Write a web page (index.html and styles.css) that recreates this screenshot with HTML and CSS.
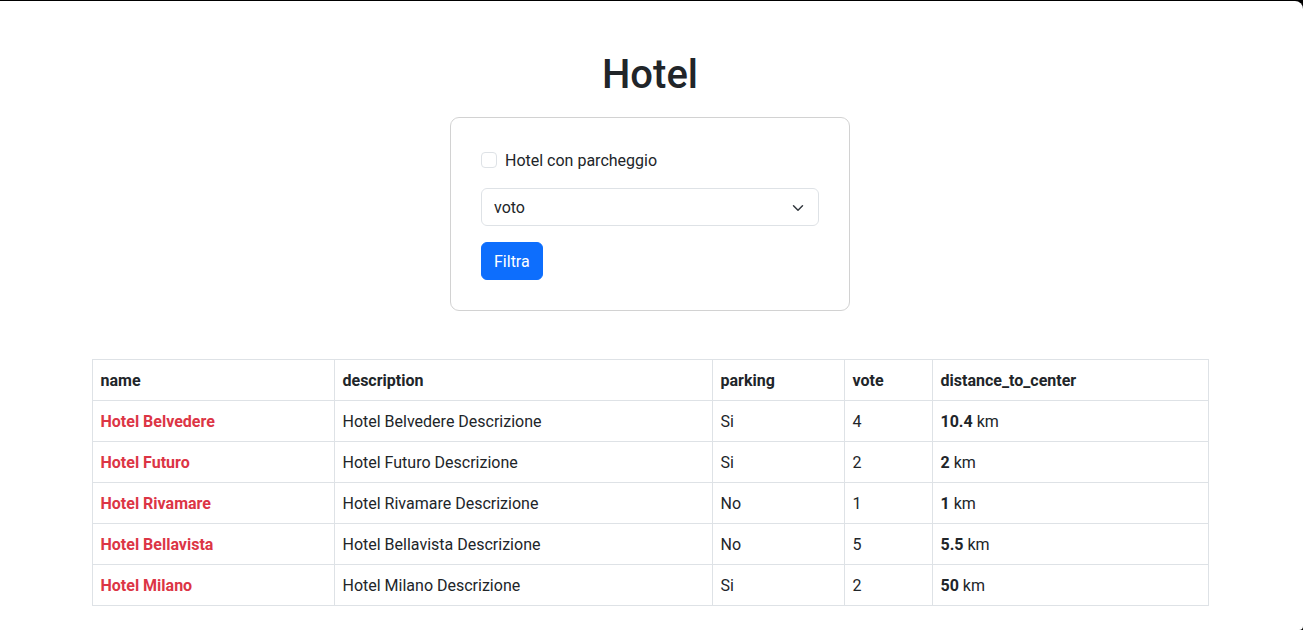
FILE: index.html
```html
<!DOCTYPE html>
<html lang="it">
<head>
<meta charset="utf-8">
<title>Hotel</title>
<link rel="stylesheet" href="styles.css">
</head>
<body>
<div class="page">
  <h1 class="title">Hotel</h1>
  <form class="card">
    <div class="form-check">
      <span class="check-box"></span>
      <label class="check-label">Hotel con parcheggio</label>
    </div>
    <div class="select">
      <span class="select-text">voto</span>
      <svg class="chevron" width="16" height="16" viewBox="0 0 16 16"><path fill="none" stroke="#343a40" stroke-linecap="round" stroke-linejoin="round" stroke-width="2" d="m2 5 6 6 6-6"/></svg>
    </div>
    <button type="button" class="btn">Filtra</button>
  </form>
  <table class="hotels">
    <colgroup>
      <col class="c-name"><col class="c-desc"><col class="c-park"><col class="c-vote"><col class="c-dist">
    </colgroup>
    <thead>
      <tr><th>name</th><th>description</th><th>parking</th><th>vote</th><th>distance_to_center</th></tr>
    </thead>
    <tbody>
      <tr><td class="name">Hotel Belvedere</td><td>Hotel Belvedere Descrizione</td><td>Si</td><td>4</td><td><strong>10.4</strong> km</td></tr>
      <tr><td class="name">Hotel Futuro</td><td>Hotel Futuro Descrizione</td><td>Si</td><td>2</td><td><strong>2</strong> km</td></tr>
      <tr><td class="name">Hotel Rivamare</td><td>Hotel Rivamare Descrizione</td><td>No</td><td>1</td><td><strong>1</strong> km</td></tr>
      <tr><td class="name">Hotel Bellavista</td><td>Hotel Bellavista Descrizione</td><td>No</td><td>5</td><td><strong>5.5</strong> km</td></tr>
      <tr><td class="name">Hotel Milano</td><td>Hotel Milano Descrizione</td><td>Si</td><td>2</td><td><strong>50</strong> km</td></tr>
    </tbody>
  </table>
</div>
</body>
</html>
```
FILE: styles.css
```css
html {
  background: #000;
}
body {
  margin: 0;
  margin-top: 1px;
  padding-right: 3px;
  height: 629px;
  overflow: hidden;
  background: #fff;
  border-top-right-radius: 8px;
  border-bottom-right-radius: 4px;
  font-family: Roboto, "Liberation Sans", sans-serif;
  font-size: 16px;
  line-height: 1.5;
  color: #212529;
}
.page {
  width: 1116px;
  margin: 0 auto;
  padding-top: 50px;
  display: flex;
  flex-direction: column;
  align-items: center;
}
.title {
  margin: 0 0 18px;
  font-size: 40px;
  font-weight: 500;
  line-height: 48px;
}
.card {
  width: 400px;
  box-sizing: border-box;
  padding: 30px;
  border: 1px solid #d2d2d2;
  border-radius: 9px;
  display: flex;
  flex-direction: column;
  align-items: flex-start;
  margin-bottom: 48px;
}
.form-check {
  display: flex;
  align-items: center;
  height: 24px;
  margin-bottom: 16px;
}
.check-box {
  width: 16px;
  height: 16px;
  box-sizing: border-box;
  border: 1px solid #dee2e6;
  border-radius: 4px;
  margin-right: 8px;
}
.check-label {
  padding-top: 2px;
}
.select {
  align-self: stretch;
  height: 38px;
  box-sizing: border-box;
  border: 1px solid #dee2e6;
  border-radius: 6px;
  padding: 1px 12px 0;
  display: flex;
  align-items: center;
  justify-content: space-between;
  margin-bottom: 16px;
}
.chevron {
  width: 16px;
  height: 12px;
}
.btn {
  height: 38px;
  padding: 1px 12px 0;
  border: 1px solid #0d6efd;
  background: #0d6efd;
  color: #fff;
  border-radius: 6px;
  font: inherit;
}
.hotels {
  width: 1116px;
  border-collapse: collapse;
  table-layout: fixed;
}
.c-name { width: 242px; }
.c-desc { width: 378px; }
.c-park { width: 132px; }
.c-vote { width: 88px; }
.c-dist { width: 276px; }
.hotels th,
.hotels td {
  border: 1px solid #dee2e6;
  padding: 9px 8px 7px;
  text-align: left;
  line-height: 24px;
}
.hotels th {
  font-weight: 700;
}
.hotels td.name {
  color: #dc3545;
  font-weight: 700;
}
.hotels strong {
  font-weight: 700;
}
```
